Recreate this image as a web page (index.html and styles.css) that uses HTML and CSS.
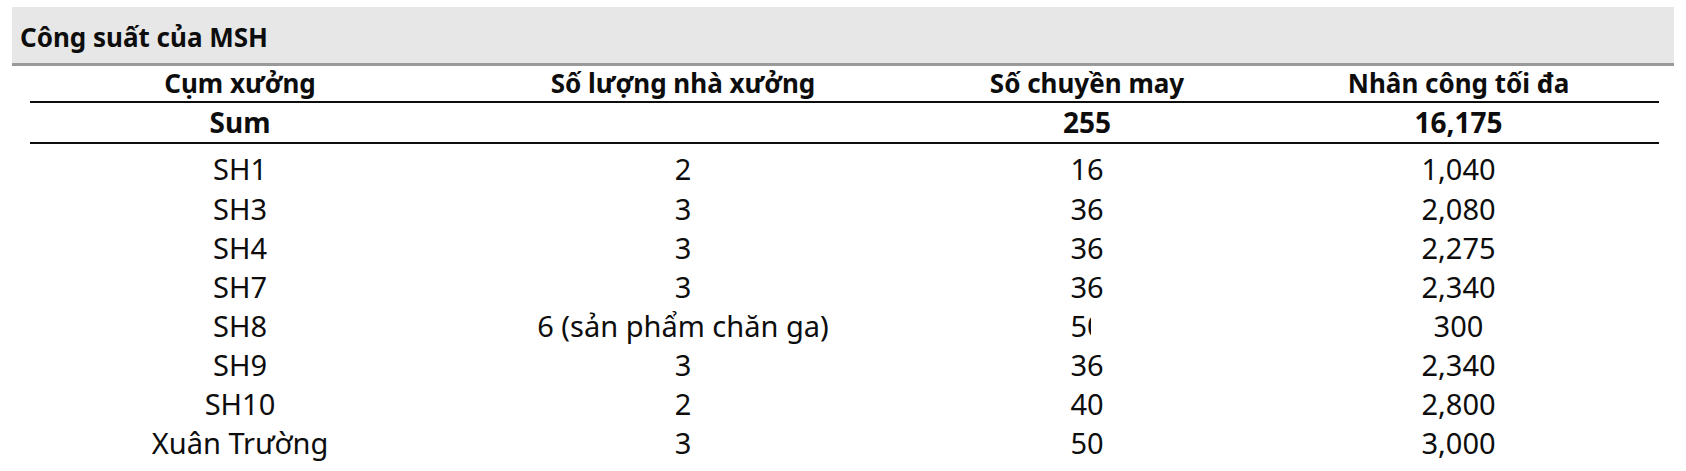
FILE: index.html
```html
<!DOCTYPE html>
<html lang="vi">
<head>
<meta charset="utf-8">
<title>Công suất của MSH</title>
<link rel="stylesheet" href="styles.css">
</head>
<body>
<div class="page">
  <div class="title-bar">Công suất của MSH</div>
  <table class="capacity">
    <colgroup>
      <col class="c1"><col class="c2"><col class="c3"><col class="c4">
    </colgroup>
    <thead>
      <tr class="head-row">
        <th>Cụm xưởng</th>
        <th>Số lượng nhà xưởng</th>
        <th>Số chuyền may</th>
        <th>Nhân công tối đa</th>
      </tr>
      <tr class="sum-row">
        <th>Sum</th>
        <th></th>
        <th>255</th>
        <th>16,175</th>
      </tr>
    </thead>
    <tbody>
      <tr class="first"><td>SH1</td><td>2</td><td>16</td><td>1,040</td></tr>
      <tr><td>SH3</td><td>3</td><td>36</td><td>2,080</td></tr>
      <tr><td>SH4</td><td>3</td><td>36</td><td>2,275</td></tr>
      <tr><td>SH7</td><td>3</td><td>36</td><td>2,340</td></tr>
      <tr><td>SH8</td><td>6 (sản phẩm chăn ga)</td><td><span class="clipped">50</span></td><td>300</td></tr>
      <tr><td>SH9</td><td>3</td><td>36</td><td>2,340</td></tr>
      <tr><td>SH10</td><td>2</td><td>40</td><td>2,800</td></tr>
      <tr><td>Xuân Trường</td><td>3</td><td>50</td><td>3,000</td></tr>
    </tbody>
  </table>
</div>
</body>
</html>
```
FILE: styles.css
```css
html, body {
  margin: 0;
  padding: 0;
  background: #ffffff;
}

body {
  font-family: "Noto Sans", "Open Sans", "DejaVu Sans", sans-serif;
  color: #0d0d0d;
}

.page {
  padding: 7px 0 0 12px;
}

.title-bar {
  width: 1654px;
  height: 52px;
  padding: 4px 0 0 8px;
  line-height: 52px;
  font-size: 26px;
  font-weight: 700;
  background: #e6e7e6;
  border-bottom: 3px solid #999a99;
  white-space: nowrap;
}

.capacity {
  margin-left: 18px;
  width: 1629px;
  table-layout: fixed;
  border-collapse: collapse;
  border-spacing: 0;
}

.c1 { width: 420px; }
.c2 { width: 466px; }
.c3 { width: 342px; }
.c4 { width: 401px; }

.capacity th,
.capacity td {
  padding: 0;
  text-align: center;
  white-space: nowrap;
}

.head-row th {
  font-size: 26px;
  font-weight: 700;
  height: 35px;
  line-height: 35px;
  border-bottom: 2px solid #0d0d0d;
}

.sum-row th {
  font-size: 28px;
  font-weight: 700;
  height: 39px;
  line-height: 39px;
  border-bottom: 2px solid #0d0d0d;
}

.capacity td {
  font-size: 29px;
  font-weight: 400;
  height: 39px;
  line-height: 39px;
}

.capacity tr.first td {
  height: 42px;
  padding-top: 3px;
  line-height: 39px;
}

.clipped {
  display: inline-block;
  width: 20px;
  margin-right: 13px;
  overflow: hidden;
  vertical-align: top;
  text-align: left;
}
```
